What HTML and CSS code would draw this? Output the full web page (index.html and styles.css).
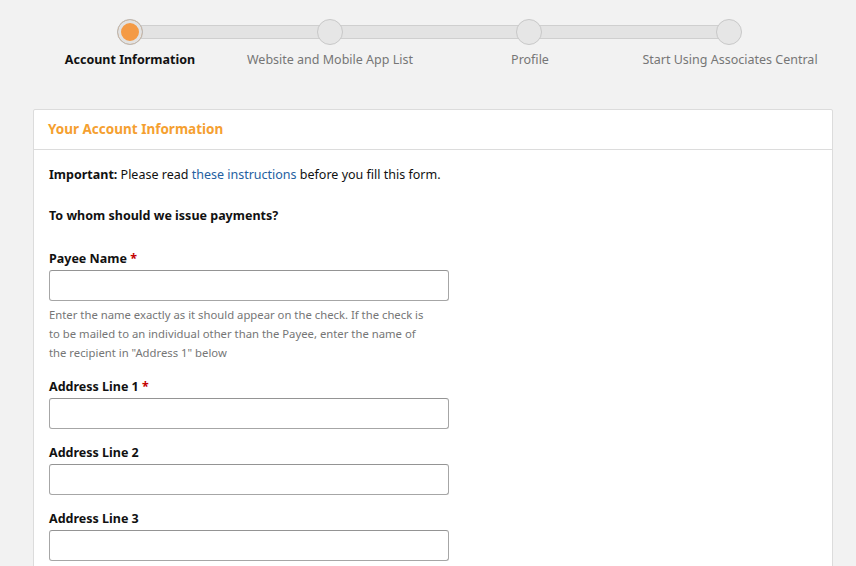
FILE: index.html
```html
<!DOCTYPE html>
<html>
<head>
<meta charset="utf-8">
<link rel="stylesheet" href="styles.css">
</head>
<body>
<div class="steps">
  <div class="track">
    <div class="bar"></div>
    <div class="dots">
      <span class="dot active"></span>
      <span class="dot"></span>
      <span class="dot"></span>
      <span class="dot"></span>
    </div>
  </div>
  <div class="labels">
    <span class="lbl current">Account Information</span>
    <span class="lbl">Website and Mobile App List</span>
    <span class="lbl">Profile</span>
    <span class="lbl">Start Using Associates Central</span>
  </div>
</div>
<div class="card">
  <div class="card-head">Your Account Information</div>
  <div class="card-body">
    <p class="note"><b>Important:</b> Please read <a href="#">these instructions</a> before you fill this form.</p>
    <p class="question">To whom should we issue payments?</p>
    <div class="field">
      <label>Payee Name <span class="req">*</span></label>
      <input type="text">
      <p class="help">Enter the name exactly as it should appear on the check. If the check is to be mailed to an individual other than the Payee, enter the name of the recipient in "Address 1" below</p>
    </div>
    <div class="field">
      <label>Address Line 1 <span class="req">*</span></label>
      <input type="text">
    </div>
    <div class="field">
      <label>Address Line 2</label>
      <input type="text">
    </div>
    <div class="field">
      <label>Address Line 3</label>
      <input type="text">
    </div>
  </div>
</div>
</body>
</html>
```
FILE: styles.css
```css
* { box-sizing: border-box; }
html, body { margin: 0; padding: 0; }
body {
  background: #f2f2f2;
  font-family: "Noto Sans", "Liberation Sans", sans-serif;
  color: #111;
  font-size: 12.5px;
  overflow: hidden;
}
.steps {
  padding-top: 19px;
  height: 109px;
}
.track {
  position: relative;
  margin: 0 0 0 117px;
  width: 625px;
  height: 26px;
}
.bar {
  position: absolute;
  left: 13px;
  right: 13px;
  top: 6px;
  height: 14px;
  background: #e3e3e3;
  border: 1px solid #cfcfcf;
}
.dots {
  position: relative;
  display: flex;
  justify-content: space-between;
}
.dot {
  width: 26px;
  height: 26px;
  border-radius: 50%;
  background: #e6e6e6;
  border: 1px solid #c8c8c8;
}
.dot.active {
  background: #f49a45;
  box-shadow: inset 0 0 0 3px #e2e2e2;
  border-color: #b8b8b8;
}
.labels {
  display: grid;
  grid-template-columns: repeat(4, 200px);
  margin: 6px 0 0 30px;
}
.lbl {
  text-align: center;
  color: #767676;
  line-height: 18px;
}
.lbl.current {
  color: #111;
  font-weight: bold;
}
.card {
  margin: 0 23px 0 33px;
  background: #fff;
  border: 1px solid #dcdcdc;
  border-radius: 2px;
}
.card-head {
  height: 40px;
  line-height: 38px;
  padding-left: 14px;
  border-bottom: 1px solid #dcdcdc;
  color: #f5a030;
  font-weight: bold;
  font-size: 13.5px;
}
.card-body {
  padding: 15px 15px 30px 15px;
}
.note {
  margin: 0;
  line-height: 19px;
}
.note a {
  color: #24609f;
  text-decoration: none;
}
.question {
  margin: 22px 0 0;
  font-weight: bold;
  line-height: 19px;
}
.field {
  margin-top: 24px;
  display: flex;
  flex-direction: column;
}
.field + .field { margin-top: 14px; }
.field label {
  font-weight: bold;
  line-height: 19px;
  margin-bottom: 2px;
}
.req { color: #c40000; }
.field input {
  width: 400px;
  height: 31px;
  border: 1px solid #a6a6a6;
  border-top-color: #949494;
  border-radius: 3px;
  background: #fff;
}
.help {
  margin: 4px 0 1px;
  width: 385px;
  font-size: 11.3px;
  line-height: 19px;
  color: #767676;
}
```
